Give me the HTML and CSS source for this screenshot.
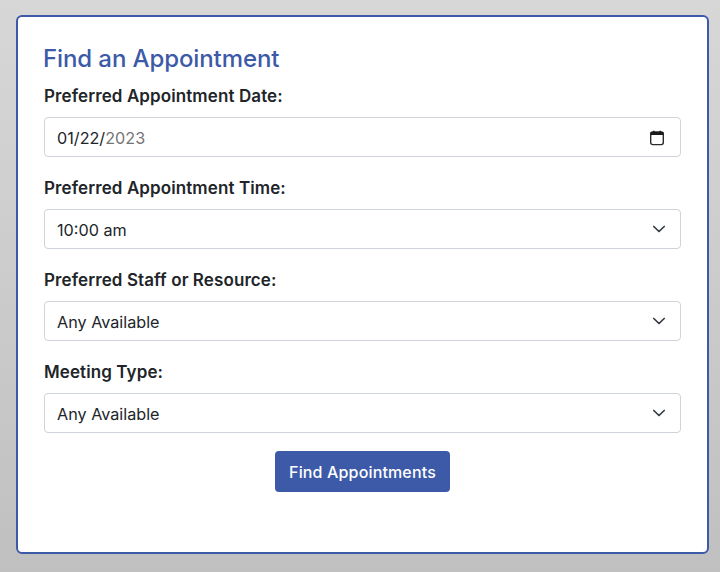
FILE: index.html
```html
<!DOCTYPE html>
<html lang="en">
<head>
  <meta charset="UTF-8" />
  <meta name="viewport" content="width=device-width, initial-scale=1.0"/>
  <title>Find an Appointment</title>
  <link rel="stylesheet" href="styles.css">
</head>
<body>

  <main class="card">
    <h2>Find an Appointment</h2>

    <form class="appt-form">
      <div class="field">
        <label>Preferred Appointment Date:</label>
        <div class="control date-control">
          <span class="date-text">01/22/<span class="date-year">2023</span></span>
          <svg class="cal-icon" width="16" height="16" viewBox="0 0 16 16">
            <rect x="1.7" y="2" width="12.6" height="12.6" rx="2" fill="none" stroke="#2b2b2b" stroke-width="1.4"/>
            <rect x="1.7" y="2" width="12.6" height="3" fill="#1a1a1a"/>
            <rect x="4" y="0.8" width="1.6" height="1.6" fill="#1a1a1a"/>
            <rect x="10.4" y="0.8" width="1.6" height="1.6" fill="#1a1a1a"/>
          </svg>
        </div>
      </div>

      <div class="field">
        <label for="appt-time">Preferred Appointment Time:</label>
        <div class="select-wrap">
          <select class="control" id="appt-time">
            <option>10:00 am</option>
          </select>
          <svg class="chevron" width="16" height="16" viewBox="0 0 16 16"><path d="M2.8 5.5L8 10.5l5.2-5" fill="none" stroke="#343a40" stroke-width="1.7" stroke-linecap="round" stroke-linejoin="round"/></svg>
        </div>
      </div>

      <div class="field">
        <label for="appt-staff">Preferred Staff or Resource:</label>
        <div class="select-wrap">
          <select class="control" id="appt-staff">
            <option>Any Available</option>
          </select>
          <svg class="chevron" width="16" height="16" viewBox="0 0 16 16"><path d="M2.8 5.5L8 10.5l5.2-5" fill="none" stroke="#343a40" stroke-width="1.7" stroke-linecap="round" stroke-linejoin="round"/></svg>
        </div>
      </div>

      <div class="field">
        <label for="appt-type">Meeting Type:</label>
        <div class="select-wrap">
          <select class="control" id="appt-type">
            <option>Any Available</option>
          </select>
          <svg class="chevron" width="16" height="16" viewBox="0 0 16 16"><path d="M2.8 5.5L8 10.5l5.2-5" fill="none" stroke="#343a40" stroke-width="1.7" stroke-linecap="round" stroke-linejoin="round"/></svg>
        </div>
      </div>

      <div class="actions">
        <button type="button" class="find-btn">Find Appointments</button>
      </div>
    </form>
  </main>

</body>
</html>
```

FILE: styles.css
```css
* {
  box-sizing: border-box;
}

html, body {
  height: 100%;
}

body {
  margin: 0;
  padding: 15px 11px 18px 16px;
  font-family: 'Inter', 'Liberation Sans', sans-serif;
  font-size: 16px;
  color: #212529;
  background: linear-gradient(to bottom, #d7d7d7, #c0c0c0);
}

.card {
  height: 539px;
  padding: 26px 26px 0;
  background: #fff;
  border: 2px solid #3c5aa8;
  border-radius: 6px;
}

h2 {
  margin: 0 0 9px -1px;
  font-size: 24px;
  line-height: 32px;
  font-weight: 500;
  letter-spacing: -0.1px;
  color: #3c5aa8;
}

.field + .field {
  margin-top: 19px;
}

label {
  display: block;
  margin-bottom: 9px;
  font-size: 17px;
  font-weight: 600;
  line-height: 24px;
  letter-spacing: 0.1px;
}

.control {
  display: block;
  width: 100%;
  height: 40px;
  padding: 1px 12px 0;
  font-family: inherit;
  font-size: 16.2px;
  line-height: 24px;
  color: #212529;
  background: #fff;
  border: 1px solid #ced4da;
  border-radius: 4px;
  appearance: none;
}

.date-control {
  display: flex;
  align-items: center;
  justify-content: space-between;
  padding-right: 15px;
}

.date-year {
  color: #757575;
}

.select-wrap {
  position: relative;
}

.chevron {
  position: absolute;
  top: 12px;
  right: 14px;
  pointer-events: none;
}

.actions {
  display: flex;
  justify-content: center;
  margin-top: 18px;
}

.find-btn {
  height: 41px;
  padding: 0 14px;
  font-family: inherit;
  font-size: 16px;
  font-weight: 500;
  letter-spacing: 0.15px;
  color: #fff;
  background: #3c5aa8;
  border: none;
  border-radius: 4px;
  cursor: pointer;
}
```
